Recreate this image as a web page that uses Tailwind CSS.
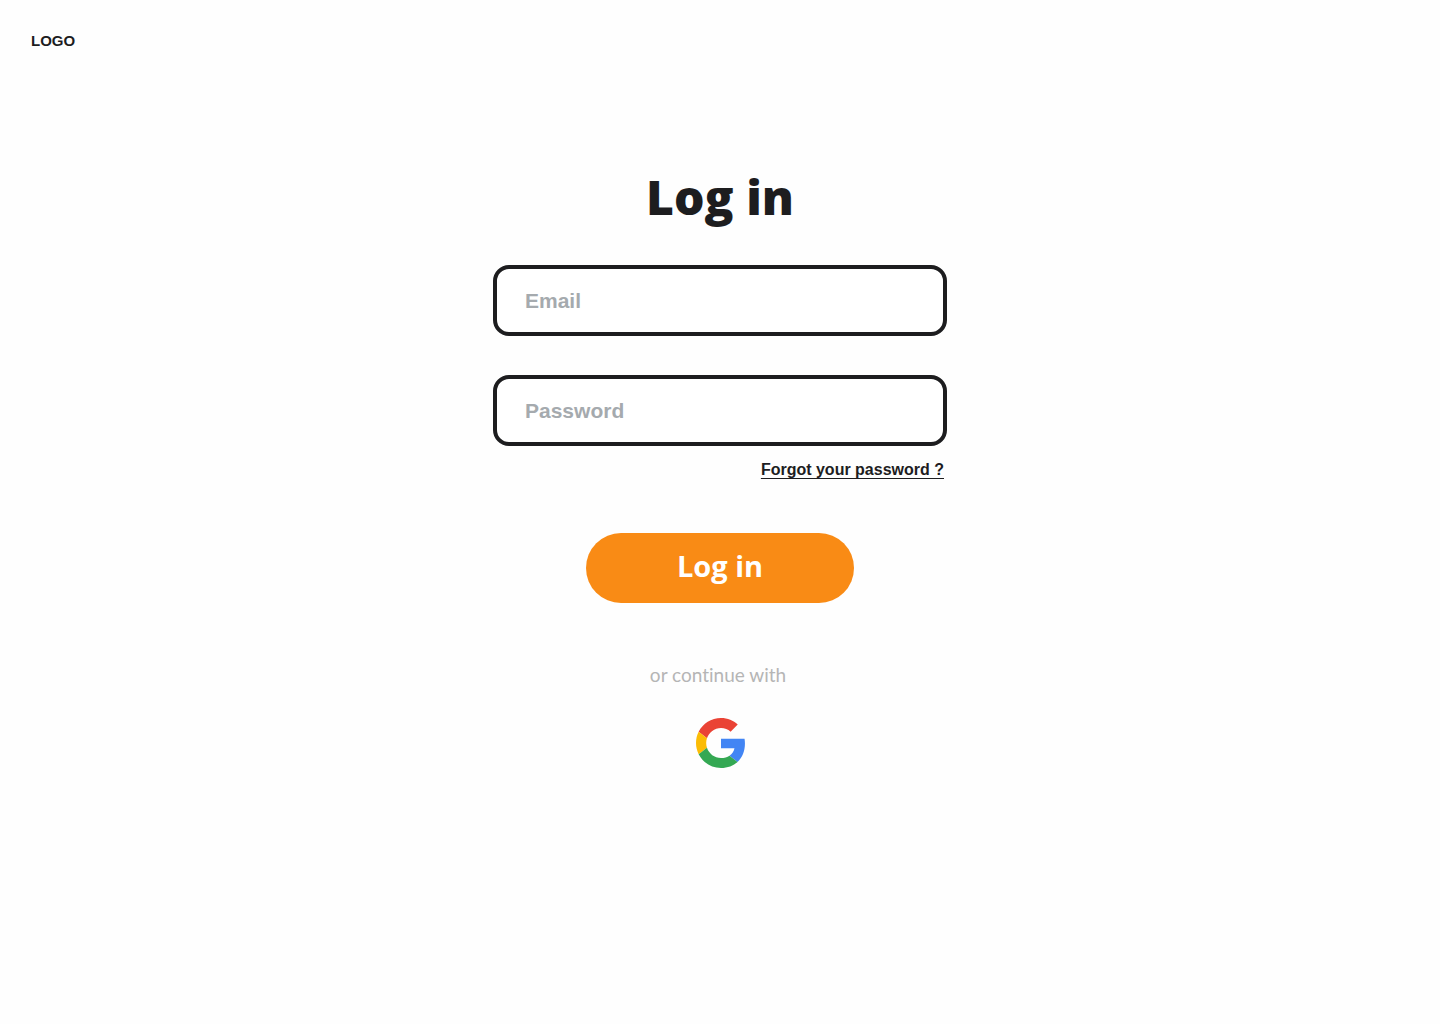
<!DOCTYPE html>
<html lang="en">
<head>
<meta charset="utf-8">
<meta name="viewport" content="width=device-width, initial-scale=1">
<title>Log in</title>
<script src="https://cdn.jsdelivr.net/npm/@tailwindcss/browser@4"></script>
</head>
<body class="min-h-screen bg-[#fefefe] font-['Liberation_Sans',sans-serif] text-[#1d1d1f]">
<header class="px-[31px] pt-[31px]">
  <a href="#" class="block w-fit text-[15px] font-bold leading-5">LOGO</a>
</header>
<main class="mx-auto flex w-full max-w-[454px] flex-col items-center pt-[114px]">
  <h1 class="font-['Open_Sans',sans-serif] text-5xl font-extrabold leading-[64px]">Log in</h1>
  <form class="mt-9 flex w-full flex-col items-center">
    <input type="email" aria-label="Email" placeholder="Email" class="h-[71px] w-full rounded-2xl border-4 border-[#1d1d1f] bg-white px-7 text-[21px] font-bold placeholder:text-[#a5aaae]">
    <input type="password" aria-label="Password" placeholder="Password" class="mt-[39px] h-[71px] w-full rounded-2xl border-4 border-[#1d1d1f] bg-white px-7 text-[21px] font-bold placeholder:text-[#a5aaae]">
    <a href="#" class="mt-3 mr-[3px] self-end text-base font-bold leading-6 underline decoration-1 underline-offset-3">Forgot your password ?</a>
    <button type="submit" class="mt-[51px] h-[70px] w-[268px] rounded-full bg-[#f98b15] pb-1 font-['Open_Sans',sans-serif] text-[29px] font-bold text-white">Log in</button>
  </form>
  <p class="mt-[58px] pr-1 font-['Lato',sans-serif] text-[19px] leading-7 text-[#b5b5b5] [font-variant-ligatures:none]">or continue with</p>
  <button type="button" aria-label="Continue with Google" class="mt-[29px] pl-px">
    <svg class="block size-[50px]" viewBox="0 0 48 48" aria-hidden="true">
      <path fill="#EA4335" d="M24 9.5c3.54 0 6.71 1.22 9.21 3.6l6.85-6.85C35.9 2.38 30.47 0 24 0 14.62 0 6.51 5.38 2.56 13.22l7.98 6.19C12.43 13.72 17.74 9.5 24 9.5z"/>
      <path fill="#4285F4" d="M46.98 24.55c0-1.57-.15-3.09-.38-4.55H24v9.02h12.94c-.58 2.96-2.26 5.48-4.78 7.18l7.73 6c4.51-4.18 7.09-10.36 7.09-17.65z"/>
      <path fill="#FBBC05" d="M10.53 28.59c-.48-1.45-.76-2.99-.76-4.59s.27-3.14.76-4.59l-7.98-6.19C.92 16.46 0 20.12 0 24c0 3.88.92 7.54 2.56 10.78l7.97-6.19z"/>
      <path fill="#34A853" d="M24 48c6.48 0 11.93-2.13 15.89-5.81l-7.73-6c-2.15 1.45-4.92 2.3-8.16 2.3-6.26 0-11.57-4.22-13.47-9.91l-7.98 6.19C6.51 42.62 14.62 48 24 48z"/>
    </svg>
  </button>
</main>
</body>
</html>
